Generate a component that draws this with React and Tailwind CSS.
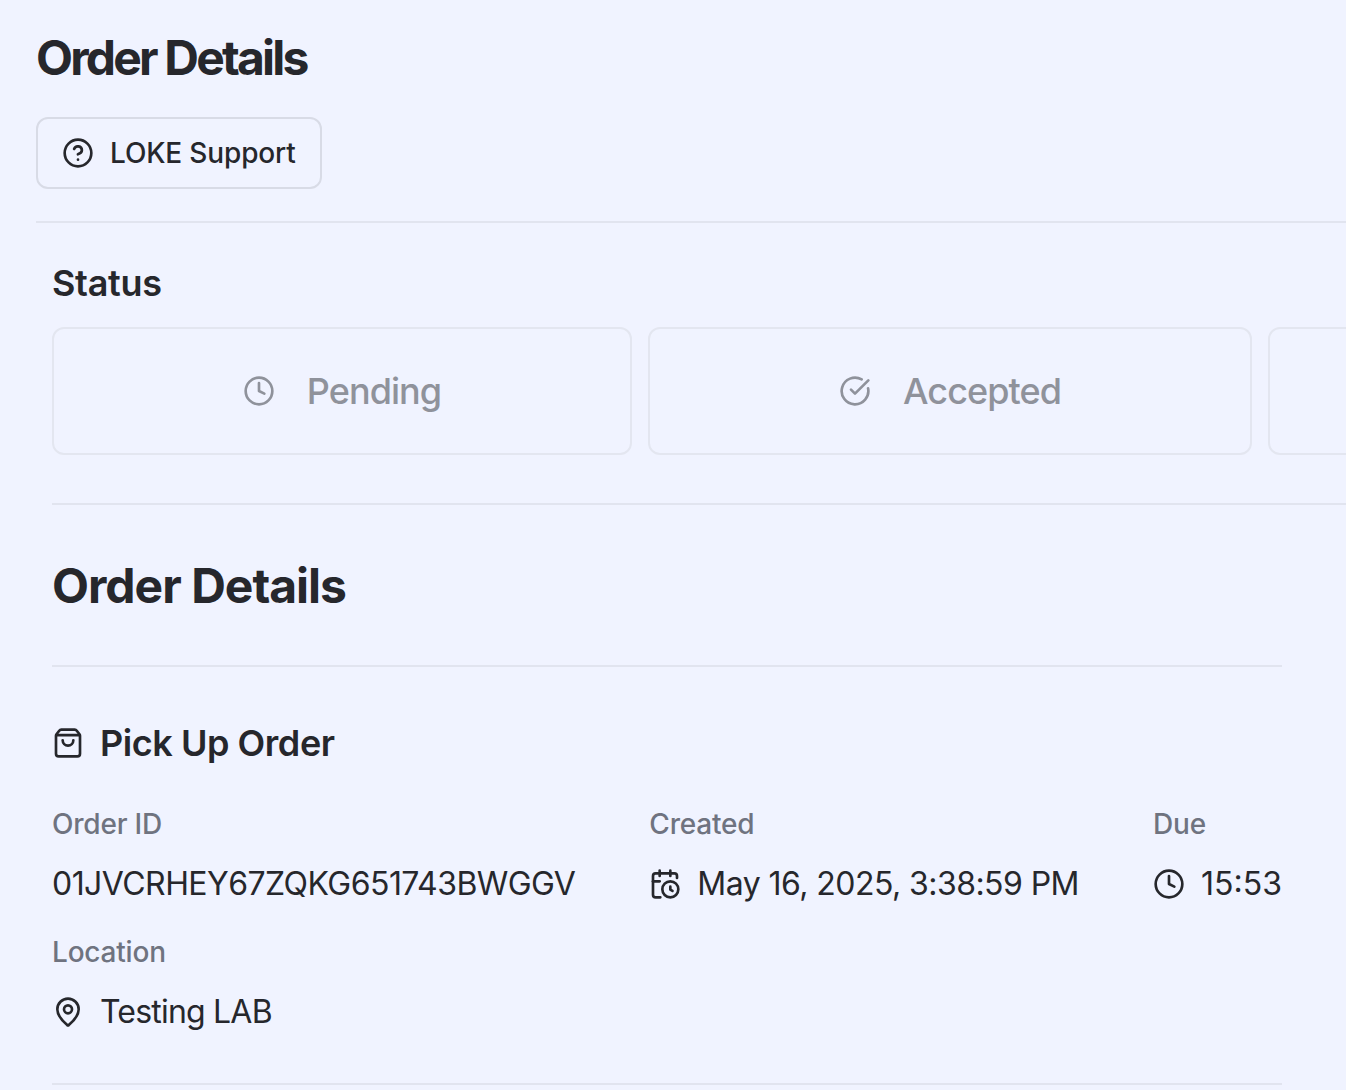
import React from "react";
import { CircleHelp, Clock, CircleCheckBig, ShoppingBag, CalendarClock, MapPin } from "lucide-react";

function StatusCard({ icon: Icon, label, className }) {
  return (
    <div className={`h-[128px] shrink-0 rounded-[12px] border-2 border-[#e3e6f0] flex items-center justify-center gap-[32px] text-[#8f929b] ${className}`}>
      {Icon && <Icon className="w-[32px] h-[32px]" strokeWidth={2} />}
      <span className="text-[36px] font-medium leading-none tracking-[-0.95px]">{label}</span>
    </div>
  );
}

function Field({ label, className, children }) {
  return (
    <div className={className}>
      <p className="text-[28px] leading-[40px] font-medium text-[#6f7380] tracking-[-0.2px]">{label}</p>
      <div className="mt-[20px] flex items-center gap-[16px] text-[32px] leading-[40px] tracking-[-0.55px] text-[#26272c] whitespace-nowrap">
        {children}
      </div>
    </div>
  );
}

export default function App() {
  return (
    <div className="w-[1346px] h-[1090px] overflow-hidden bg-[#f0f3ff] text-[#26272c] font-['Inter',sans-serif]">
      <div className="pl-[36px] pt-[32px]">
        <h1 className="text-[48px] leading-[52px] font-bold tracking-[-2.8px]">Order Details</h1>
        <button className="mt-[33px] h-[72px] w-[286px] rounded-[12px] border-2 border-[#d8dbe6] flex items-center pl-[24px] gap-[16px]">
          <CircleHelp className="w-[32px] h-[32px]" strokeWidth={2} />
          <span className="text-[28px] font-medium leading-none tracking-[-0.15px]">LOKE Support</span>
        </button>
        <div className="mt-[32px] h-[2px] bg-[#e1e4ef]" />
      </div>

      <div className="pl-[52px] pt-[36px]">
        <h2 className="text-[36px] leading-[48px] font-semibold tracking-[-0.3px]">Status</h2>
        <div className="mt-[20px] flex gap-[16px]">
          <StatusCard icon={Clock} label="Pending" className="w-[580px]" />
          <StatusCard icon={CircleCheckBig} label="Accepted" className="w-[604px]" />
          <StatusCard className="w-[400px]" />
        </div>
        <div className="mt-[48px] h-[2px] bg-[#e1e4ef]" />

        <div className="w-[1230px]">
          <h2 className="mt-[53px] text-[48px] leading-[56px] font-bold tracking-[-1px]">Order Details</h2>
          <div className="mt-[51px] h-[2px] bg-[#e1e4ef]" />

          <div className="mt-[54px] flex items-center gap-[16px]">
            <ShoppingBag className="w-[32px] h-[32px]" strokeWidth={2} />
            <h3 className="text-[36px] leading-[44px] font-semibold tracking-[-0.45px]">Pick Up Order</h3>
          </div>

          <div className="mt-[39px] flex justify-between">
            <Field label="Order ID">01JVCRHEY67ZQKG651743BWGGV</Field>
            <Field label="Created">
              <CalendarClock className="w-[32px] h-[32px]" strokeWidth={2} />
              May 16, 2025, 3:38:59 PM
            </Field>
            <Field label="Due">
              <Clock className="w-[32px] h-[32px]" strokeWidth={2} />
              <span className="tracking-normal">15:53</span>
            </Field>
          </div>

          <Field label="Location" className="mt-[28px]">
            <MapPin className="w-[32px] h-[32px]" strokeWidth={2} />
            <span className="tracking-[-0.8px]">Testing LAB</span>
          </Field>

          <div className="mt-[51px] h-[2px] bg-[#e1e4ef]" />
        </div>
      </div>
    </div>
  );
}
